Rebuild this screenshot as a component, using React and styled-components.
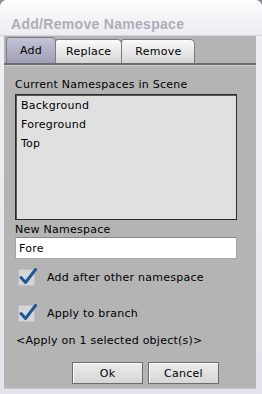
import React, { useState } from 'react';
import styled, { createGlobalStyle } from 'styled-components';

const Global = createGlobalStyle`
  html, body { margin: 0; padding: 0; background: #8e8e92; }
  body {
    font-family: "DejaVu Sans", Verdana, sans-serif;
    font-size: 11px;
    letter-spacing: 0.25px;
    color: #000;
  }
`;

const Window = styled.div`
  width: 262px;
  height: 394px;
  box-sizing: border-box;
  display: flex;
  flex-direction: column;
  background: linear-gradient(#f0f0f4, #e4e4ec);
  border-radius: 7px 7px 0 0;
  overflow: hidden;
`;

const TitleBar = styled.div`
  height: 36px;
  flex: none;
  display: flex;
  align-items: center;
  padding: 13px 0 0 11px;
  box-sizing: border-box;
  background: linear-gradient(#fdfdfe, #ececf2);
  border-bottom: 1px solid #d4d4dc;
`;

const Title = styled.span`
  font-family: "Liberation Sans", Arial, sans-serif;
  font-size: 14px;
  font-weight: bold;
  color: #aeaeb6;
  letter-spacing: 0.3px;
`;

const Client = styled.div`
  flex: 1;
  margin: 0 6px 5px 4px;
  background: #b4b4b4;
  display: flex;
  flex-direction: column;
  border-bottom: 1px solid #c8c8d0;
`;

const TabStrip = styled.div`
  display: flex;
  align-items: flex-end;
  height: 27px;
  padding: 0 2px 0 2px;
  border-bottom: 2px solid #6c6c6c;
  box-shadow: 0 1px 0 #cfcfcf;
`;

const Tab = styled.div`
  height: ${p => (p.$active ? 26 : 24)}px;
  box-sizing: border-box;
  padding: 0 ${p => p.$pad}px;
  display: flex;
  align-items: center;
  border: 1px solid #7c7c7c;
  border-bottom: none;
  border-radius: 3px 5px 0 0;
  margin-right: -1px;
  background: ${p =>
    p.$active
      ? 'linear-gradient(#c4c4d6, #9e9eb6)'
      : 'linear-gradient(#fafafa, #d6d6d6)'};
  z-index: ${p => (p.$active ? 1 : 0)};
`;

const Panel = styled.div`
  display: flex;
  flex-direction: column;
  padding: 13px 0 0 11px;
`;

const Label = styled.div`
  height: 14px;
  line-height: 14px;
  margin-top: ${p => p.$mt || 0}px;
`;

const ListBox = styled.div`
  width: 222px;
  height: 126px;
  box-sizing: border-box;
  margin-top: 2px;
  background: #e0e0e0;
  border: 1px solid #2a2a2a;
  box-shadow: inset 1px 1px 0 #5a5a5a;
  padding: 1px 0 0 5px;
`;

const ListItem = styled.div`
  height: 19px;
  line-height: 19px;
`;

const Input = styled.input`
  width: 222px;
  height: 22px;
  box-sizing: border-box;
  border: 1px solid #a6a6a6;
  border-top-color: #8a8a8a;
  background: #fff;
  font: 11px "DejaVu Sans", Verdana, sans-serif;
  letter-spacing: 0.25px;
  padding: 0 3px;
  outline: none;
`;

const CheckRow = styled.label`
  display: flex;
  align-items: center;
  height: 18px;
  margin-top: ${p => p.$mt}px;
  padding-left: 3px;
  gap: 9px;
`;

const StatusText = styled.div`
  height: 14px;
  line-height: 14px;
  margin-top: 12px;
  padding-left: 1px;
`;

const ButtonRow = styled.div`
  display: flex;
  gap: 5px;
  margin-top: 14px;
  padding-left: 57px;
`;

const Button = styled.button`
  width: 71px;
  height: 22px;
  box-sizing: border-box;
  font: 11px "DejaVu Sans", Verdana, sans-serif;
  letter-spacing: 0.25px;
  color: #000;
  border: 1px solid #6e6e6e;
  background: linear-gradient(#ececec, #d6d6d6);
  box-shadow: inset 1px 1px 0 #fafafa;
  padding: 0;
`;

function Check() {
  return (
    <svg width="20" height="18" viewBox="0 0 20 18">
      <rect x="0.5" y="1.5" width="16" height="16" fill="#d6d6d8" stroke="#c0c0c4" />
      <path d="M3 9.5 L7.5 14.5 L17.5 1.5" fill="none" stroke="#1f5a98" strokeWidth="3" strokeLinecap="round" strokeLinejoin="round" />
    </svg>
  );
}

export default function App() {
  const [ns, setNs] = useState('Fore');
  return (
    <>
      <Global />
      <Window>
        <TitleBar>
          <Title>Add/Remove Namespace</Title>
        </TitleBar>
        <Client>
          <TabStrip>
            <Tab $active $pad={13}>Add</Tab>
            <Tab $pad={10}>Replace</Tab>
            <Tab $pad={13}>Remove</Tab>
          </TabStrip>
          <Panel>
            <Label>Current Namespaces in Scene</Label>
            <ListBox>
              <ListItem>Background</ListItem>
              <ListItem>Foreground</ListItem>
              <ListItem>Top</ListItem>
            </ListBox>
            <Label $mt={3}>New Namespace</Label>
            <Input value={ns} onChange={e => setNs(e.target.value)} />
            <CheckRow $mt={9}>
              <Check />
              <span>Add after other namespace</span>
            </CheckRow>
            <CheckRow $mt={18}>
              <Check />
              <span>Apply to branch</span>
            </CheckRow>
            <StatusText>&lt;Apply on 1 selected object(s)&gt;</StatusText>
            <ButtonRow>
              <Button>Ok</Button>
              <Button>Cancel</Button>
            </ButtonRow>
          </Panel>
        </Client>
      </Window>
    </>
  );
}
